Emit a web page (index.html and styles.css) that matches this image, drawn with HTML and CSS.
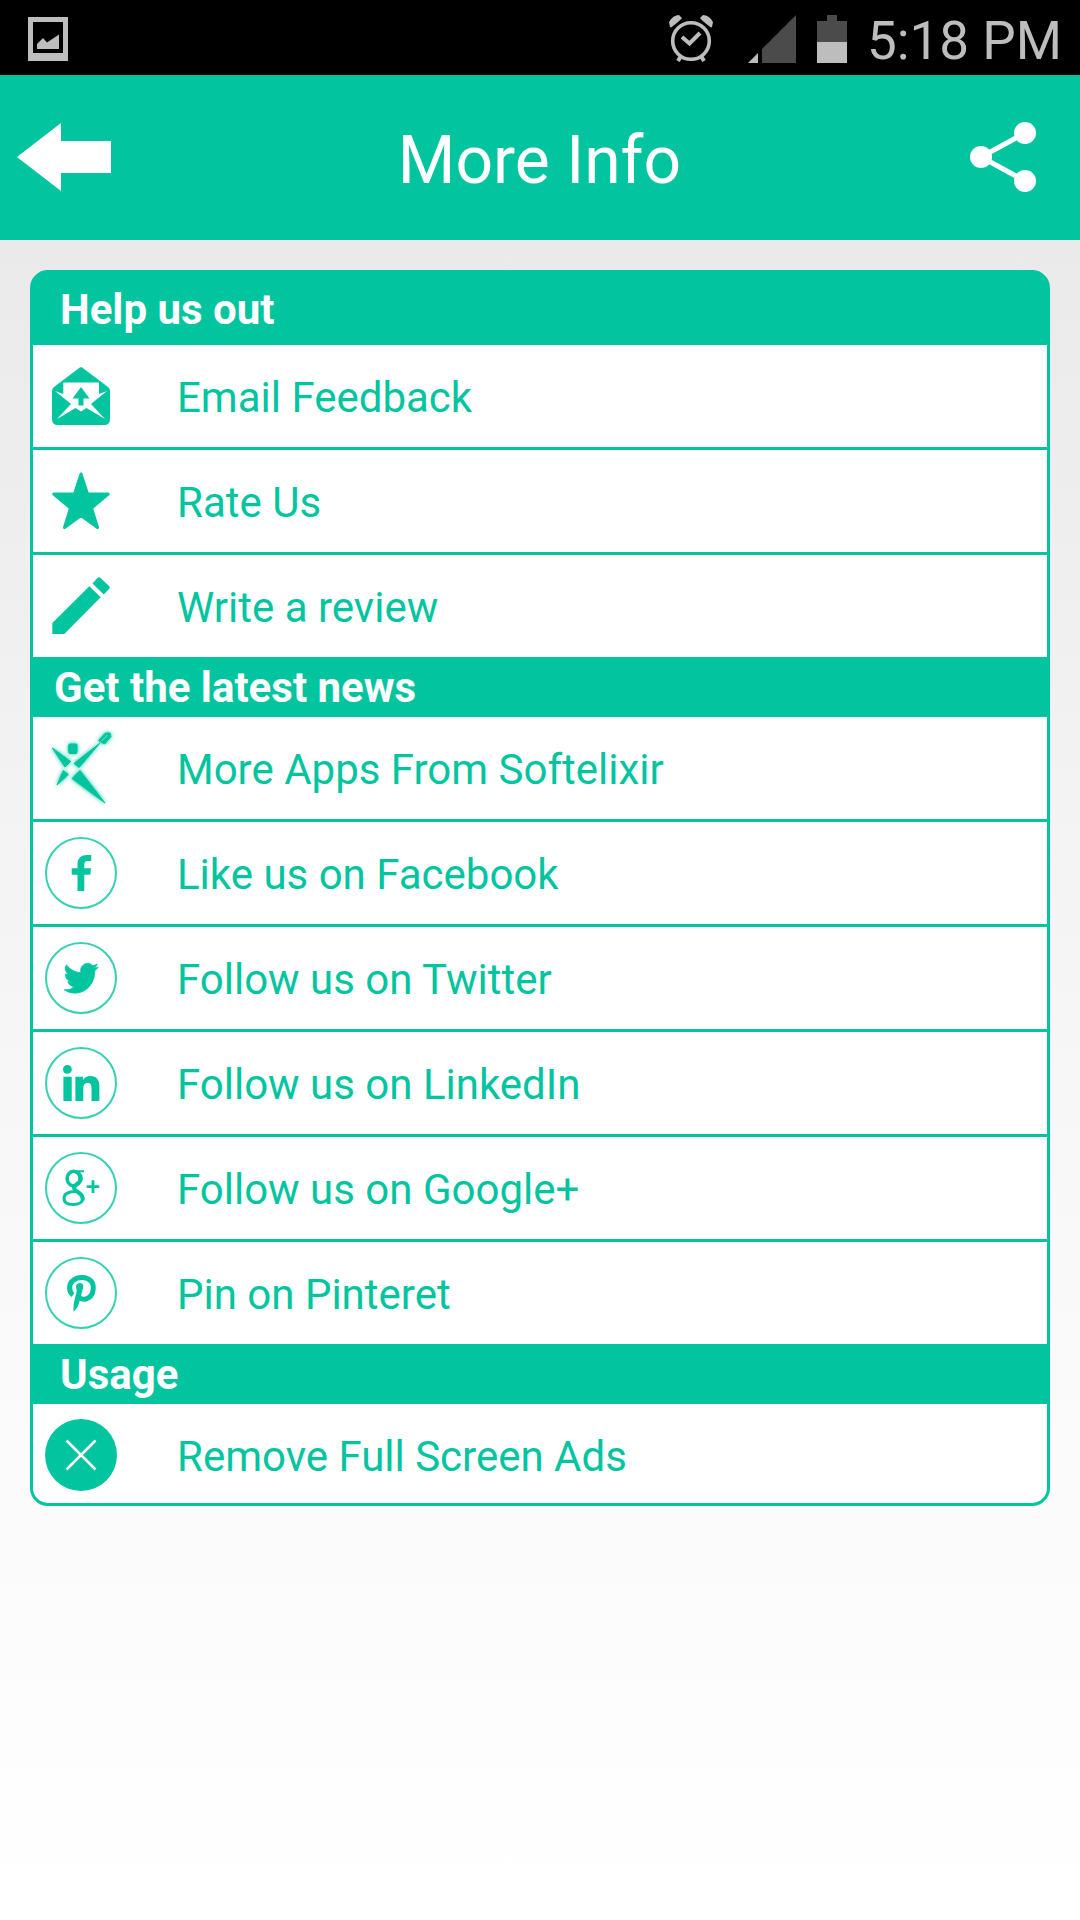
FILE: index.html
```html
<!DOCTYPE html>
<html lang="en">
<head>
  <meta charset="UTF-8" />
  <meta name="viewport" content="width=device-width, initial-scale=1.0"/>
  <title>More Info</title>
  <link rel="stylesheet" href="styles.css">
</head>
<body>

  <!-- Status Bar -->
  <div class="status-bar">
    <svg class="status-photo" width="40" height="44" viewBox="0 0 40 44" aria-hidden="true">
      <path fill="#bdbdbd" fill-rule="evenodd" d="M0 0H40V44H0ZM5 5V36H35V5Z"/>
      <path fill="#bdbdbd" d="M9 32V27L15 21L19 25.500L31 17.500V32Z"/>
    </svg>
    <div class="status-right">
      <svg class="status-alarm" width="44" height="48" viewBox="0 0 44 48" aria-hidden="true">
        <g fill="none" stroke="#bdbdbd">
          <circle cx="22" cy="26" r="18.300" stroke-width="3.600"/>
          <path stroke-width="4" d="M13 22L20.500 28.500L31 18"/>
          <path stroke-width="4" d="M12 41L9 46M32 41L35 46"/>
        </g>
        <path fill="#bdbdbd" d="M1 12L0 7Q4 0 10 0L13 3Q12 5 2 12.500ZM43 12L44 7Q40 0 34 0L31 3Q32 5 42 12.500Z"/>
      </svg>
      <svg class="status-signal" width="48" height="48" viewBox="0 0 48 48" aria-hidden="true">
        <path fill="#4b4b4b" d="M14 48V34L48 0V48Z"/>
        <path fill="#bdbdbd" d="M0 48L10 38V48Z"/>
      </svg>
      <svg class="status-battery" width="30" height="48" viewBox="0 0 30 48" aria-hidden="true">
        <path fill="#4b4b4b" d="M10 0H20V6H30V27H0V6H10Z"/>
        <path fill="#bdbdbd" d="M0 27H30V48H0Z"/>
      </svg>
      <span class="status-time">5:18 PM</span>
    </div>
  </div>

  <!-- Title Bar -->
  <header class="title-bar">
    <button class="icon-btn back-btn" aria-label="Back">
      <svg width="94" height="68" viewBox="0 0 94 68"><path fill="#fff" d="M0 34L44 0V18H94V50H44V68Z"/></svg>
    </button>
    <h1>More Info</h1>
    <button class="icon-btn share-btn" aria-label="Share">
      <svg width="66" height="70" viewBox="0 0 66 70">
        <path fill="none" stroke="#fff" stroke-width="5" d="M55 11L11 35L55 59"/>
        <g fill="#fff"><circle cx="55" cy="11" r="11"/><circle cx="11" cy="35" r="11"/><circle cx="55" cy="59" r="11"/></g>
      </svg>
    </button>
  </header>

  <!-- Main Content -->
  <main class="content">
    <div class="card">
      <h2 class="section-title first">Help us out</h2>
      <ul class="links">
        <li><a href="#email">
          <svg class="icon" viewBox="0 0 72 72" aria-hidden="true">
            <path fill="#02c59f" d="M33.500 8.500Q36 6 38.500 8.500L63 27Q65 28.500 65 31V59Q65 65 59 65H13Q7 65 7 59V31Q7 28.500 9 27Z"/>
            <path fill="#fff" d="M18.300 22.500H54V34L62 31L46 44L60 59L41.500 48L36 51.500L30.500 48L12 59L26 44L10 31L18.300 34Z"/>
            <path fill="#02c59f" d="M36 27L44.500 38.500H38.500V45.500H33.500V38.500H27.500Z"/>
          </svg>
          <span>Email Feedback</span></a></li>
        <li><a href="#rate">
          <svg class="icon" viewBox="0 0 72 72" aria-hidden="true">
            <path fill="#02c59f" stroke="#02c59f" stroke-width="3" stroke-linejoin="round" d="M36 9L42.500 29H63.200L46.500 43L52.500 62.500L36 50.500L19.500 62.500L25.500 43L8.800 29H29.500Z"/>
          </svg>
          <span>Rate Us</span></a></li>
        <li><a href="#review">
          <svg class="icon" viewBox="0 0 72 72" aria-hidden="true">
            <path fill="#02c59f" d="M7.300 64V53L44.300 16.300L55.700 27.300L19.300 64Z"/>
            <path fill="#02c59f" d="M47.500 13.500L52.500 8Q54 6.500 55.500 8L64 16Q65.500 17.500 64 19L58.700 24.500Z"/>
          </svg>
          <span>Write a review</span></a></li>
      </ul>

      <h2 class="section-title near">Get the latest news</h2>
      <ul class="links">
        <li><a href="#apps">
          <svg class="icon glow" viewBox="0 0 72 72" aria-hidden="true">
            <g fill="#02c59f" stroke="#02c59f" stroke-linejoin="round">
              <path d="M25 12H31Q32.500 12 32 14V20Q32 22 30 21.500H25Q23.500 21.500 23.700 19V14Q23.500 12 25 12Z"/>
              <path d="M7.300 16L25.700 29.500L20 35Z"/>
              <path d="M29 31.500L55 11L34 35.500Z"/>
              <path d="M53.500 8.500L60.500 1H65L66 4.500L59.500 12Z"/>
              <path d="M18.300 38.500L23.300 42.500L12 53Z"/>
              <path d="M35 38.500L27 46.500L60 71Z"/>
            </g>
            <path stroke="#fff" stroke-opacity=".5" d="M56.500 9L62.500 3"/>
          </svg>
          <span>More Apps From Softelixir</span></a></li>
        <li><a href="#facebook">
          <svg class="icon" viewBox="0 0 72 72" aria-hidden="true">
            <circle class="ring" cx="36" cy="36" r="35"/>
            <path fill="#02c59f" d="M32.500 54V37.700H26.700V31.300H32.500V27C32.500 21 36.500 18 42 18H46.300V24H43C40.500 24 39.300 25 39.300 27.500V31.300H46L45.300 37.700H39.300V54Z"/>
          </svg>
          <span>Like us on Facebook</span></a></li>
        <li><a href="#twitter">
          <svg class="icon" viewBox="0 0 72 72" aria-hidden="true">
            <circle class="ring" cx="36" cy="36" r="35"/>
            <path fill="#02c59f" stroke="#02c59f" stroke-width=".5" transform="translate(19 17.900) scale(1.430 1.530)" d="M23.950 4.570a10 10 0 0 1-2.820.770 4.960 4.960 0 0 0 2.160-2.720c-.950.550-2 .960-3.130 1.180a4.920 4.920 0 0 0-8.380 4.480C7.690 8.090 4.070 6.130 1.640 3.160a4.820 4.820 0 0 0-.670 2.480c0 1.710.870 3.210 2.190 4.100a4.900 4.900 0 0 1-2.230-.620v.060a4.920 4.920 0 0 0 3.950 4.830 5 5 0 0 1-2.210.080 4.940 4.940 0 0 0 4.600 3.420A9.870 9.870 0 0 1 0 19.540a13.990 13.990 0 0 0 7.550 2.210c9.050 0 14-7.500 14-13.980 0-.210 0-.420-.020-.630a9.940 9.940 0 0 0 2.460-2.550z"/>
          </svg>
          <span>Follow us on Twitter</span></a></li>
        <li><a href="#linkedin">
          <svg class="icon" viewBox="0 0 72 72" aria-hidden="true">
            <circle class="ring" cx="36" cy="36" r="35"/>
            <g fill="#02c59f">
              <circle cx="22.400" cy="22.400" r="4.400"/>
              <path d="M18.400 29.700H26.700V54H18.400Z"/>
              <path d="M30.400 29.700H38V33C39.500 30.500 42 29 45.500 29C52 29 54.400 33 54.400 40V54H46.500V41.500C46.500 38 45.700 36 42.700 36C39.500 36 38.300 38.200 38.300 41.500V54H30.400Z"/>
            </g>
          </svg>
          <span>Follow us on LinkedIn</span></a></li>
        <li><a href="#google">
          <svg class="icon" viewBox="0 0 72 72" aria-hidden="true">
            <circle class="ring" cx="36" cy="36" r="35"/>
            <g fill="none" stroke="#02c59f">
              <path stroke-width="2" d="M39 19.300H29"/>
              <ellipse cx="28.600" cy="26.500" rx="6.500" ry="7.200" stroke-width="3.500"/>
              <path stroke-width="4" d="M33 20.500Q38 26 34 30.500Q29 34 29 36Q29 37.500 33.500 40.500Q38.500 44 37.500 48"/>
              <path stroke-width="3" d="M31 39.500C22 39.500 19 43 19 46.500C19 51 23 52.500 28 52.500C34 52.500 38 50 38 45.500"/>
              <path stroke-width="2.800" d="M41.700 34.600H54.300M48 28.300V41"/>
            </g>
          </svg>
          <span>Follow us on Google+</span></a></li>
        <li><a href="#pinterest">
          <svg class="icon" viewBox="0 0 72 72" aria-hidden="true">
            <circle class="ring" cx="36" cy="36" r="35"/>
            <path fill="none" stroke="#02c59f" stroke-width="5" d="M28 38C23.500 35 23.500 27 28 23.500C33 19.500 42 19.500 46 24C50 28.500 48.500 38.500 43 41C39.500 43 35.500 42.500 34 39.500"/>
            <path fill="#02c59f" d="M31 29Q32 26 35 26Q38.800 26.500 38.300 30L35 42Q34 49 29.500 54H28.500Q28 48 29.500 43L31.800 34Q31 31 31 29Z"/>
          </svg>
          <span>Pin on Pinteret</span></a></li>
      </ul>

      <h2 class="section-title">Usage</h2>
      <ul class="links">
        <li><a href="#remove-ads">
          <svg class="icon" viewBox="0 0 72 72" aria-hidden="true">
            <circle fill="#02c59f" cx="36" cy="36" r="36"/>
            <path stroke="#fff" stroke-width="2.500" d="M21.500 21.500L50.500 50.500M50.500 21.500L21.500 50.500"/>
          </svg>
          <span>Remove Full Screen Ads</span></a></li>
      </ul>
    </div>
  </main>

</body>
</html>
```
FILE: styles.css
```css
:root {
  --primary: #02c59f;
  --status: #bdbdbd;
}

* {
  box-sizing: border-box;
}

body {
  margin: 0;
  min-height: 100vh;
  display: flex;
  flex-direction: column;
  font-family: Roboto, sans-serif;
  font-size: 42px;
  background: #fff;
}

svg {
  display: block;
  flex: none;
}

.status-bar {
  display: flex;
  justify-content: space-between;
  align-items: center;
  height: 75px;
  padding: 2px 18px 0 28px;
  background: #000;
}

.status-photo {
  margin-top: 1px;
}

.status-right {
  display: flex;
  align-items: center;
}

.status-alarm {
  margin-right: 35px;
}

.status-signal {
  margin-right: 21px;
}

.status-battery {
  margin-right: 20px;
}

.status-time {
  padding-top: 5px;
  font-size: 53px;
  line-height: 64px;
  color: var(--status);
}

.title-bar {
  display: grid;
  grid-template-columns: 1fr auto 1fr;
  align-items: center;
  height: 165px;
  padding: 0 44px 0 17px;
  background: var(--primary);
  color: #fff;
}

.title-bar h1 {
  margin: 0;
  padding-top: 6px;
  padding-left: 26px;
  font-size: 66px;
  font-weight: 400;
}

.icon-btn {
  padding: 0 0 2px;
  border: none;
  background: none;
  cursor: pointer;
}

.back-btn {
  justify-self: start;
}

.share-btn {
  justify-self: end;
}

.content {
  flex: 1;
  padding: 30px;
  background: linear-gradient(#eaeaea, #f7f7f7 50%, #fff);
}

.card {
  overflow: hidden;
  border: 3px solid var(--primary);
  border-radius: 18px;
  background: var(--primary);
}

.section-title {
  display: flex;
  align-items: center;
  height: 60px;
  margin: 0;
  padding-left: 27px;
  font-size: 42px;
  font-weight: 700;
  color: #fff;
}

.section-title.first {
  height: 72px;
}

.section-title.near {
  padding-left: 21px;
}

.links {
  margin: 0;
  padding: 0;
  list-style: none;
  background: #fff;
}

.links li + li {
  border-top: 3px solid var(--primary);
}

.links a {
  display: flex;
  align-items: center;
  gap: 60px;
  padding: 15px 12px;
  color: var(--primary);
  text-decoration: none;
}

.links span {
  padding-top: 3px;
}

.links:last-child a {
  padding-bottom: 12px;
}

.icon {
  width: 72px;
  height: 72px;
}

.ring {
  fill: none;
  stroke: var(--primary);
  stroke-width: 2;
  opacity: 0.8;
}

.glow {
  filter: drop-shadow(0 0 2px var(--primary));
}
```
